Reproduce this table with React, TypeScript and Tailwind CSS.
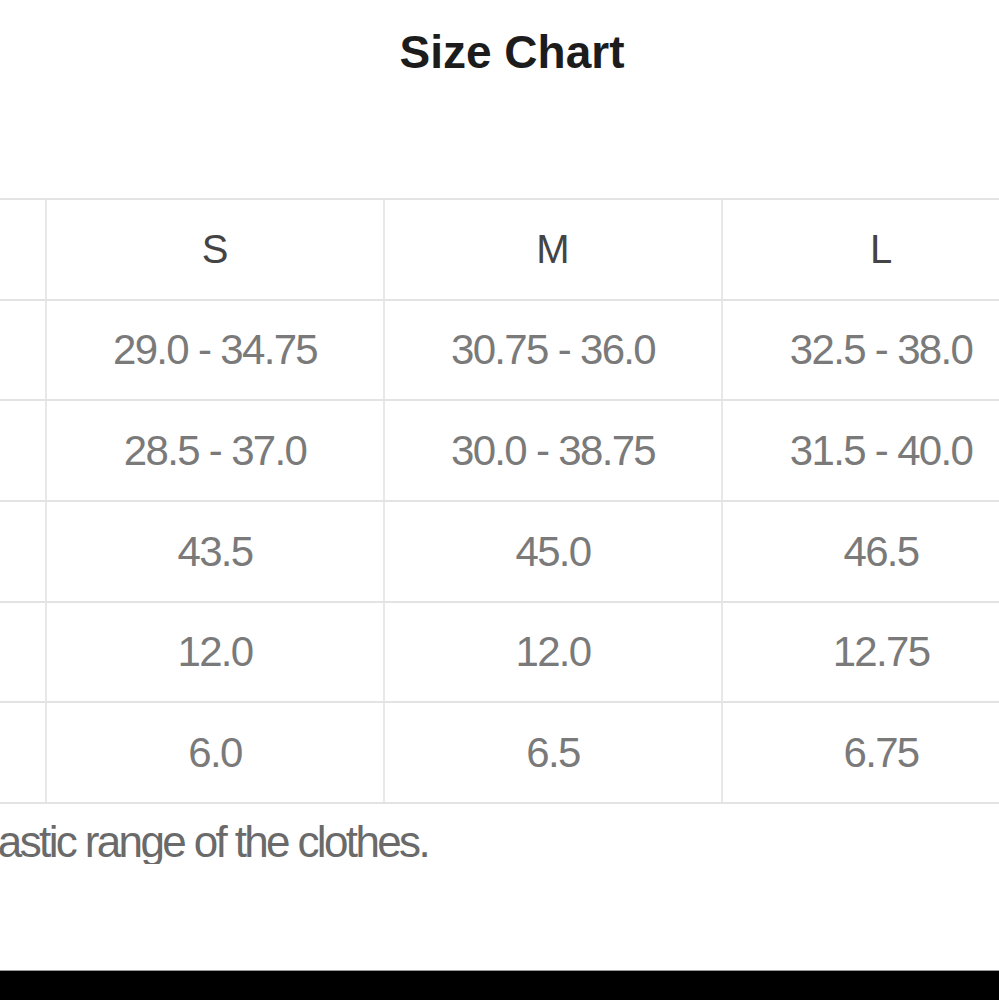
import React from "react";

const rows: string[][] = [
    ["29.0 - 34.75", "30.75 - 36.0", "32.5 - 38.0"],
    ["28.5 - 37.0", "30.0 - 38.75", "31.5 - 40.0"],
    ["43.5", "45.0", "46.5"],
    ["12.0", "12.0", "12.75"],
    ["6.0", "6.5", "6.75"],
];

const colWidths = ["w-[338px]", "w-[338px]", "w-[316px]"];

function Row({cells, header}: {cells: string[]; header?: boolean}) {
    return (
        <div className="flex h-[100.67px] border-b-2 border-[#e3e3e3]">
            {/* first column sits outside the crop */}
            <div className="w-[338px] shrink-0 border-r-2 border-[#e8e8e8]"/>
            {cells.map((c, i) => (
                <div
                    key={i}
                    className={`${colWidths[i]} shrink-0 flex items-center justify-center ${i < 2 ? "border-r-2 border-[#e8e8e8]" : ""} ${header ? "text-[40px] text-[#444444]" : "text-[42px] text-[#7a7a7a] tracking-[-0.04em]"}`}
                >
                    {c}
                </div>
            ))}
        </div>
    );
}

export default function App() {
    return (
        <div className="h-[1000px] w-full flex flex-col bg-white overflow-hidden"
             style={{fontFamily: '"Liberation Sans", Arial, sans-serif'}}>
            <div className="h-[198px] shrink-0 pl-[25px] pt-[29px] flex justify-center">
                <h1 className="text-[46px] leading-none font-bold text-[#1c1c1c]">Size Chart</h1>
            </div>

            <div className="w-full overflow-hidden">
                <div className="ml-[-291px] w-[1330px] border-t-2 border-[#e3e3e3]">
                    <Row cells={["S", "M", "L"]} header/>
                    {rows.map((r, i) => <Row key={i} cells={r}/>)}
                </div>
            </div>

            <div className="w-full overflow-hidden mt-[16px]">
                <div className="w-[428px] flex justify-end">
                    <p className="whitespace-nowrap text-[44px] leading-none text-[#6a6a6a] tracking-[-0.06em]">
                        Note: The data is the elastic range of the clothes.
                    </p>
                </div>
            </div>

            <div className="flex-1"/>
            <div className="h-[30px] shrink-0 bg-black border-t border-[#9a9a9a]"/>
        </div>
    );
}
